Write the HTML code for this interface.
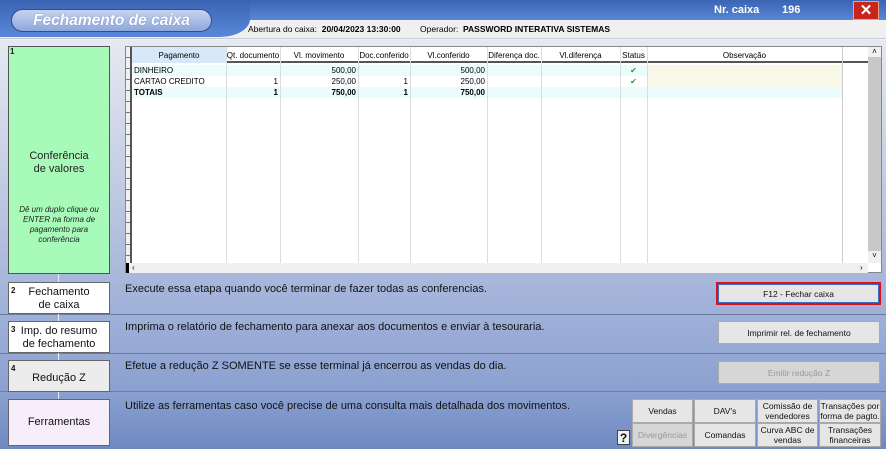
<!DOCTYPE html>
<html><head><meta charset="utf-8">
<style>
*{margin:0;padding:0;box-sizing:border-box}
body{width:886px;height:449px;overflow:hidden;font-family:"Liberation Sans",Arial,sans-serif;position:relative;background:#eef0f4}
.abs{position:absolute}
#hdr{left:0;top:0;width:886px;height:44px;background:#f0f0f0}
#band{left:0;top:0;width:886px;height:20px;background:linear-gradient(#3a64b4,#5a86d4)}
#bandL{left:0;top:0;width:250px;height:37px;background:linear-gradient(#3a64b4,#5a88d8);border-bottom-right-radius:30px 18px}
#title{left:11px;top:9px;width:201px;height:23px;border-radius:12px;background:linear-gradient(#c5d3ee,#8ea7dc);border:1px solid #2e4f92;color:#fff;font-style:italic;font-weight:bold;font-size:15.5px;text-align:center;line-height:21px;text-shadow:0 0 1px #4a6ab0}
.hl{font-size:8.5px;color:#000}
#main{left:0;top:40px;width:886px;height:236px;background:linear-gradient(#e6e9f0,#a9b8da)}
#green{left:8px;top:46px;width:102px;height:228px;background:#a7fab8;border:1px solid #555;text-align:center;color:#222}
#grid{left:125px;top:46px;width:757px;height:227px;background:#fff;border:1px solid #888}
.c{position:absolute;font-size:8px;line-height:11px;white-space:nowrap}
.sec{left:0;width:886px;border-bottom:1px solid #6c7c9c}
.box{position:absolute;left:8px;width:102px;border:1px solid #666;text-align:center;font-size:11px;color:#111;line-height:13px}
.num{position:absolute;left:2px;top:1px;font-size:8px;font-weight:bold;text-align:left}
.txt{position:absolute;left:125px;font-size:11px;color:#111}
.btn{position:absolute;background:#e6e6e6;border:1px solid #aaa;font-size:8.5px;text-align:center;color:#111;display:flex;align-items:center;justify-content:center;line-height:10px}
</style></head><body>
<div id="hdr" class="abs"></div>
<div id="band" class="abs"></div>
<div id="bandL" class="abs"></div>
<div id="title" class="abs">Fechamento de caixa</div>
<div class="abs hl" style="left:248px;top:24px">Abertura do caixa:&nbsp; <b>20/04/2023 13:30:00</b></div>
<div class="abs hl" style="left:420px;top:24px">Operador:&nbsp; <b>PASSWORD INTERATIVA SISTEMAS</b></div>
<div class="abs" style="left:714px;top:4px;color:#fff;font-weight:bold;font-size:11px">Nr. caixa</div>
<div class="abs" style="left:782px;top:4px;color:#fff;font-weight:bold;font-size:11px">196</div>
<div class="abs" style="left:853px;top:1px;width:26px;height:19px;background:#c8251b;border:1px solid #f0a090;color:#fff;font-weight:bold;font-size:15px;text-align:center;line-height:17px">✕</div>
<div id="main" class="abs"></div>
<div class="abs" style="left:0;top:38px;width:886px;height:1px;background:#c8ccd4"></div>
<div id="green" class="abs">
<div style="position:absolute;left:1px;top:0;font-size:8px;font-weight:bold">1</div>
<div style="position:absolute;left:0;width:100%;top:103px;font-size:11px;line-height:13px">Conferência<br>de valores</div>
<div style="position:absolute;left:0;width:100%;top:158px;font-size:8px;font-style:italic;line-height:10px">Dê um duplo clique ou<br>ENTER na forma de<br>pagamento para<br>conferência</div>
</div>
<div id="grid" class="abs">
 <div class="abs" style="left:0;top:0;width:6px;height:216px;background:#f0f0f0;border-right:2px solid #555;background-image:repeating-linear-gradient(#f0f0f0 0 10px,#777 10px 11px)"></div>
 <div class="abs" style="left:6px;top:0;width:744px;height:16px;background:#fff;border-bottom:2px solid #555"></div>
 <div class="abs" style="left:6px;top:0;width:94px;height:16px;background:#d8e8f8"></div>
 <div class="abs" style="left:6px;top:18px;width:710px;height:11px;background:#eafcfc"></div>
 <div class="abs" style="left:6px;top:40px;width:710px;height:11px;background:#eafcfc"></div>
 <div class="abs" style="left:521px;top:18px;width:195px;height:22px;background:#f8f8e8"></div>
 <div class="abs" style="left:100px;top:0;width:1px;height:216px;background:#ddd"></div>
 <div class="abs" style="left:154px;top:0;width:1px;height:216px;background:#ddd"></div>
 <div class="abs" style="left:232px;top:0;width:1px;height:216px;background:#ddd"></div>
 <div class="abs" style="left:284px;top:0;width:1px;height:216px;background:#ddd"></div>
 <div class="abs" style="left:361px;top:0;width:1px;height:216px;background:#ddd"></div>
 <div class="abs" style="left:415px;top:0;width:1px;height:216px;background:#ddd"></div>
 <div class="abs" style="left:494px;top:0;width:1px;height:216px;background:#ddd"></div>
 <div class="abs" style="left:521px;top:0;width:1px;height:216px;background:#ddd"></div>
 <div class="abs" style="left:716px;top:0;width:1px;height:216px;background:#ccc"></div>
 <div class="abs" style="left:742px;top:0;width:13px;height:216px;background:#c8c8c8"></div>
 <div class="abs" style="left:742px;top:0;width:13px;height:10px;background:#f0f0f0;font-size:8px;text-align:center">˄</div>
 <div class="abs" style="left:742px;top:204px;width:13px;height:12px;background:#f0f0f0;font-size:8px;text-align:center">˅</div>
 <div class="abs" style="left:0;top:216px;width:742px;height:10px;background:#f0f0f0;border-left:3px solid #000"></div>
 <div class="c" style="left:6px;top:217px;font-size:8px;line-height:8px">‹</div>
 <div class="c" style="left:734px;top:217px;font-size:8px;line-height:8px">›</div>
 <div class="c" style="left:6px;width:94px;top:3px;text-align:center">Pagamento</div>
 <div class="c" style="left:100px;width:54px;top:3px;text-align:center">Qt. documento</div>
 <div class="c" style="left:154px;width:78px;top:3px;text-align:center">Vl. movimento</div>
 <div class="c" style="left:232px;width:52px;top:3px;text-align:center">Doc.conferido</div>
 <div class="c" style="left:284px;width:77px;top:3px;text-align:center">Vl.conferido</div>
 <div class="c" style="left:361px;width:54px;top:3px;text-align:center">Diferença doc.</div>
 <div class="c" style="left:415px;width:79px;top:3px;text-align:center">Vl.diferença</div>
 <div class="c" style="left:494px;width:27px;top:3px;text-align:center">Status</div>
 <div class="c" style="left:521px;width:195px;top:3px;text-align:center">Observação</div>
 <div class="c" style="left:8px;top:18px">DINHEIRO</div>
 <div class="c" style="left:8px;top:29px">CARTAO CREDITO</div>
 <div class="c" style="left:8px;top:40px;font-weight:bold">TOTAIS</div>
 <div class="c" style="left:100px;width:52px;top:29px;text-align:right">1</div>
 <div class="c" style="left:100px;width:52px;top:40px;text-align:right;font-weight:bold">1</div>
 <div class="c" style="left:154px;width:76px;top:18px;text-align:right">500,00</div>
 <div class="c" style="left:154px;width:76px;top:29px;text-align:right">250,00</div>
 <div class="c" style="left:154px;width:76px;top:40px;text-align:right;font-weight:bold">750,00</div>
 <div class="c" style="left:232px;width:50px;top:29px;text-align:right">1</div>
 <div class="c" style="left:232px;width:50px;top:40px;text-align:right;font-weight:bold">1</div>
 <div class="c" style="left:284px;width:75px;top:18px;text-align:right">500,00</div>
 <div class="c" style="left:284px;width:75px;top:29px;text-align:right">250,00</div>
 <div class="c" style="left:284px;width:75px;top:40px;text-align:right;font-weight:bold">750,00</div>
 <div class="c" style="left:494px;width:27px;top:18px;text-align:center;color:#2a9a2a">✔</div>
 <div class="c" style="left:494px;width:27px;top:29px;text-align:center;color:#2a9a2a">✔</div>
</div>
<div class="abs sec" style="top:275px;height:40px;background:linear-gradient(#a9b8dc,#9fb0d8)"></div>
<div class="abs sec" style="top:315px;height:39px;background:linear-gradient(#9fb0d8,#95a8d4)"></div>
<div class="abs sec" style="top:354px;height:38px;background:linear-gradient(#95a8d4,#8aa0cf)"></div>
<div class="abs" style="left:0;top:392px;width:886px;height:57px;background:linear-gradient(#8aa0cf,#6f89c2)"></div>
<div class="abs" style="left:58px;top:274px;width:1px;height:125px;background:#e8eef8"></div>
<div class="box" style="top:282px;height:32px;background:#fff;padding-top:3px"><span class="num">2</span>Fechamento<br>de caixa</div>
<div class="box" style="top:321px;height:32px;background:#fff;padding-top:3px"><span class="num">3</span>Imp. do resumo<br>de fechamento</div>
<div class="box" style="top:360px;height:32px;background:#ececec;padding-top:11px"><span class="num">4</span>Redução Z</div>
<div class="box" style="top:399px;height:47px;background:#f6eefa;padding-top:16px">Ferramentas</div>
<div class="txt" style="top:283px">Execute essa etapa quando você terminar de fazer todas as conferencias.</div>
<div class="txt" style="top:321px">Imprima o relatório de fechamento para anexar aos documentos e enviar à tesouraria.</div>
<div class="txt" style="top:360px">Efetue a redução Z SOMENTE se esse terminal já encerrou as vendas do dia.</div>
<div class="txt" style="top:400px">Utilize as ferramentas caso você precise de uma consulta mais detalhada dos movimentos.</div>
<div class="btn" style="left:716px;top:282px;width:165px;height:23px;border:2px solid #e0101a;outline:1px solid #3a6fc0;outline-offset:-3px">F12 - Fechar caixa</div>
<div class="btn" style="left:718px;top:321px;width:162px;height:23px">Imprimir rel. de fechamento</div>
<div class="btn" style="left:718px;top:361px;width:162px;height:23px;color:#999;background:#d6d6d6">Emitir redução Z</div>
<div class="btn" style="left:632px;top:399px;width:61px;height:24px">Vendas</div>
<div class="btn" style="left:694px;top:399px;width:62px;height:24px">DAV's</div>
<div class="btn" style="left:757px;top:399px;width:61px;height:24px">Comissão de<br>vendedores</div>
<div class="btn" style="left:819px;top:399px;width:62px;height:24px">Transações por<br>forma de pagto.</div>
<div class="btn" style="left:632px;top:423px;width:61px;height:24px;color:#999;background:#d6d6d6">Divergências</div>
<div class="btn" style="left:694px;top:423px;width:62px;height:24px">Comandas</div>
<div class="btn" style="left:757px;top:423px;width:61px;height:24px">Curva ABC de<br>vendas</div>
<div class="btn" style="left:819px;top:423px;width:62px;height:24px">Transações<br>financeiras</div>
<div class="btn" style="left:617px;top:430px;width:13px;height:15px;font-size:12px;font-weight:bold;background:#f0f0f0;border-color:#444">?</div>
</body></html>
